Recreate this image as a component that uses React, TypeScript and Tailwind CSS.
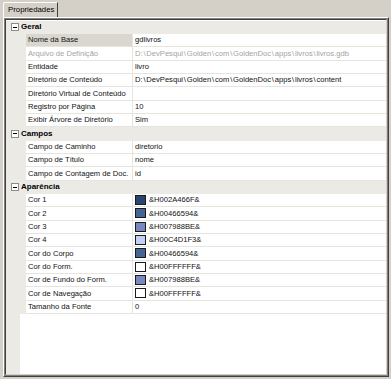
import React from 'react';

type Row = { label: string; value?: string; color?: string; disabled?: boolean; selected?: boolean };
type Category = { name: string; rows: Row[] };

const categories: Category[] = [
  {
    name: 'Geral',
    rows: [
      { label: 'Nome da Base', value: 'gdlivros', selected: true },
      { label: 'Arquivo de Definição', value: 'D:\\DevPesqui\\Golden\\com\\GoldenDoc\\apps\\livros\\livros.gdb', disabled: true },
      { label: 'Entidade', value: 'livro' },
      { label: 'Diretório de Conteúdo', value: 'D:\\DevPesqui\\Golden\\com\\GoldenDoc\\apps\\livros\\content' },
      { label: 'Diretório Virtual de Conteúdo', value: '' },
      { label: 'Registro por Página', value: '10' },
      { label: 'Exibir Árvore de Diretório', value: 'Sim' },
    ],
  },
  {
    name: 'Campos',
    rows: [
      { label: 'Campo de Caminho', value: 'diretorio' },
      { label: 'Campo de Título', value: 'nome' },
      { label: 'Campo de Contagem de Doc.', value: 'id' },
    ],
  },
  {
    name: 'Aparência',
    rows: [
      { label: 'Cor 1', value: '&H002A466F&', color: '#2a466f' },
      { label: 'Cor 2', value: '&H00466594&', color: '#466594' },
      { label: 'Cor 3', value: '&H007988BE&', color: '#7988be' },
      { label: 'Cor 4', value: '&H00C4D1F3&', color: '#c4d1f3' },
      { label: 'Cor do Corpo', value: '&H00466594&', color: '#466594' },
      { label: 'Cor do Form.', value: '&H00FFFFFF&', color: '#ffffff' },
      { label: 'Cor de Fundo do Form.', value: '&H007988BE&', color: '#7988be' },
      { label: 'Cor de Navegação', value: '&H00FFFFFF&', color: '#ffffff' },
      { label: 'Tamanho da Fonte', value: '0' },
    ],
  },
];

// paths: the original font draws a wider backslash
const renderValue = (v: string) =>
  v.split('\\').map((part, i) => (
    <React.Fragment key={i}>
      {i > 0 && <span className="px-[0.8px]">\</span>}
      {part}
    </React.Fragment>
  ));

const CategoryRow = ({ name }: { name: string }) => (
  <div className="flex h-[13.333px] items-center bg-[#eceae5] shrink-0">
    <div className="w-[15px] flex items-center justify-center pl-[2px]">
      <div className="w-[8px] h-[8px] border border-[#8c8c8c] bg-white flex items-center justify-center">
        <div className="w-[4px] h-px bg-black" />
      </div>
    </div>
    <span className="font-bold text-[8px] leading-none text-black">{name}</span>
  </div>
);

const PropRow = ({ row }: { row: Row }) => (
  <div className="flex h-[13.333px] shrink-0">
    <div className="w-[20px] bg-[#eceae5]" />
    <div
      className={`w-[106px] flex items-center pl-[2px] border-b border-[#e6e4de] whitespace-nowrap overflow-hidden ${
        row.selected ? 'bg-[#d9d7d0]' : 'bg-white'
      } ${row.disabled ? 'text-[#a3a3a3]' : 'text-[#111]'}`}
    >
      {row.label}
    </div>
    <div className="w-px bg-[#e6e4de]" />
    <div
      className={`flex-1 flex items-center pl-[2px] border-b border-[#e6e4de] bg-white whitespace-nowrap overflow-hidden ${
        row.disabled ? 'text-[#a3a3a3]' : 'text-[#111]'
      }`}
    >
      {row.color && (
        <span className="w-[11px] h-[10px] border border-[#1a1a1a] mr-[3px] shrink-0" style={{ backgroundColor: row.color }} />
      )}
      {row.value && renderValue(row.value)}
    </div>
  </div>
);

export default function App() {
  return (
    <div
      className="w-[391px] h-[379px] bg-[#d4d0c8] pt-[2px] pl-[3px] flex flex-col text-[7.6px] leading-none"
      style={{ fontFamily: '"Liberation Sans", Arial, sans-serif' }}
    >
      {/* tab header */}
      <div className="w-[55px] h-[15px] border-t border-l border-r border-white border-r-[#404040] rounded-tl-[2px] flex items-center pl-[4px] text-[7.8px] text-black">
        Propriedades
      </div>

      {/* tab page */}
      <div className="w-[386px] h-[360px] border-t border-l border-white border-r border-b border-r-[#404040] border-b-[#404040] flex flex-col">
        <div className="flex-1 flex flex-col border-r border-b border-[#808080]">
          <div className="flex-1 flex flex-col border-t border-l border-[#808080]">
            <div className="flex-1 flex flex-col border-t border-l border-[#404040] border-r border-b border-r-[#d4d0c8] border-b-[#d4d0c8] bg-white pt-[0.667px] overflow-hidden">
              {categories.map((cat) => (
                <React.Fragment key={cat.name}>
                  <CategoryRow name={cat.name} />
                  {cat.rows.map((r) => (
                    <PropRow key={r.label} row={r} />
                  ))}
                </React.Fragment>
              ))}
              <div className="flex-1 flex">
                <div className="w-[14px] bg-[#eceae5]" />
                <div className="flex-1 bg-white" />
              </div>
            </div>
          </div>
        </div>
      </div>
    </div>
  );
}
